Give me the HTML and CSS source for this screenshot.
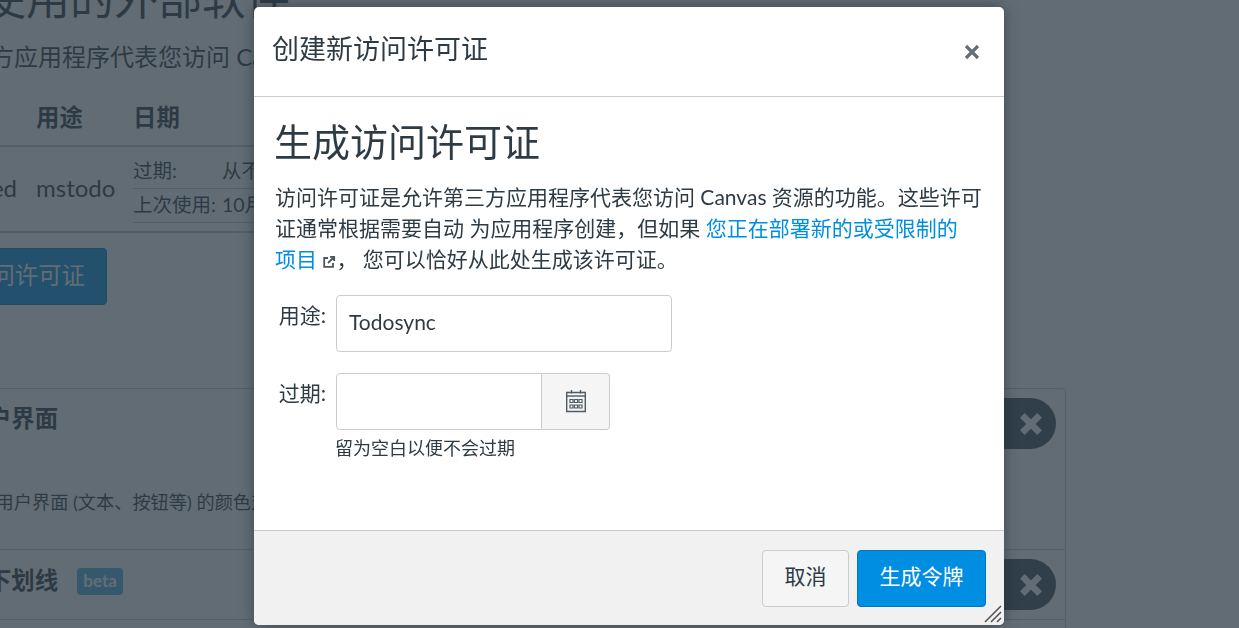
FILE: index.html
```html
<!DOCTYPE html>
<html lang="zh">
<head>
    <meta charset="UTF-8">
    <meta name="viewport" content="width=device-width, initial-scale=1.0">
    <title>创建新访问许可证</title>
    <link rel="stylesheet" href="styles.css">
</head>
<body>
    <div class="page">
        <h1 class="page-title">经核准使用的外部软件</h1>
        <p class="page-sub">这些第三方应用程序代表您访问 Canvas</p>
        <div class="token-table">
            <div class="token-head">
                <div class="col-app"></div>
                <div class="col-purpose">用途</div>
                <div class="col-date">日期</div>
            </div>
            <div class="token-row">
                <div class="col-app">Authorized</div>
                <div class="col-purpose">mstodo</div>
                <div class="col-date">
                    <div class="date-line"><span class="date-key">过期:</span><span>从不</span></div>
                    <div class="date-line"><span class="date-key">上次使用:</span><span>10月</span></div>
                </div>
            </div>
        </div>
        <button class="new-token">新建访问许可证</button>
        <div class="feature-panel">
            <div class="feature feature-first">
                <h3>高对比度用户界面</h3>
                <p>增强此用户界面 (文本、按钮等) 的颜色对比度</p>
                <span class="toggle"><svg viewBox="0 0 24 24" width="26" height="26"><path d="M4 4 20 20M20 4 4 20" stroke="#fff" stroke-width="6"/></svg></span>
            </div>
            <div class="feature feature-second">
                <h3>为链接添加下划线 <span class="beta">beta</span></h3>
                <span class="toggle"><svg viewBox="0 0 24 24" width="26" height="26"><path d="M4 4 20 20M20 4 4 20" stroke="#fff" stroke-width="6"/></svg></span>
            </div>
            <div class="feature feature-third"></div>
        </div>
    </div>

    <div class="overlay"></div>

    <div class="dialog">
        <div class="dialog-head">
            <h2>创建新访问许可证</h2>
            <svg class="close-icon" viewBox="0 0 16 16" width="16" height="16"><path d="M2 2 14 14M14 2 2 14" stroke="#666f76" stroke-width="3.2"/></svg>
        </div>
        <div class="dialog-body">
            <h1>生成访问许可证</h1>
            <p class="intro">访问许可证是允许第三方应用程序代表您访问 Canvas 资源的功能。这些许可证通常根据需要自动 为应用程序创建，但如果 <a href="#">您正在部署新的或受限制的<span class="nowrap">项目 <svg class="ext-icon" viewBox="0 0 14 14" width="14" height="14"><path d="M6 3H2.2v8.8H11V8M8 1.8h4.2V6M12 2 6 8" fill="none" stroke="#4a5660" stroke-width="1.8"/></svg></span></a>， 您可以恰好从此处生成该许可证。</p>
            <div class="field purpose-field">
                <label for="purpose">用途:</label>
                <input type="text" id="purpose" value="Todosync">
            </div>
            <div class="field">
                <label for="expires">过期:</label>
                <div class="date-wrap">
                    <div class="date-input">
                        <input type="text" id="expires">
                        <span class="cal-btn">
                            <svg viewBox="0 0 22 24" width="22" height="24">
                                <path d="M1.700 3.500h18.600v19H1.700z" fill="none" stroke="#4f5a63" stroke-width="1.400"/>
                                <path d="M1.700 7h18.600" stroke="#4f5a63" stroke-width="1.400"/>
                                <path d="M6.500 1v3.500M15.500 1v3.500" stroke="#4f5a63" stroke-width="1.400"/>
                                <path d="M5 10.500h3v3H5zM9.500 10.500h3v3h-3zM14 10.500h3v3h-3zM5 16h3v3H5zM9.500 16h3v3h-3zM14 16h3v3h-3z" fill="#fff" stroke="#4f5a63" stroke-width="1.200"/>
                            </svg>
                        </span>
                    </div>
                    <div class="hint">留为空白以便不会过期</div>
                </div>
            </div>
        </div>
        <div class="dialog-foot">
            <button class="btn">取消</button>
            <button class="btn btn-primary">生成令牌</button>
            <svg class="grip" viewBox="0 0 18 18" width="18" height="18"><path d="M17 1 1 17M17 7 7 17M17 13 13 17" stroke="#555" stroke-width="1.6"/></svg>
        </div>
    </div>
</body>
</html>
```

FILE: styles.css
```css
html, body {
    margin: 0;
    height: 100%;
    overflow: hidden;
}
body {
    font-family: Lato, "Noto Sans CJK SC", sans-serif;
    color: #2d3b45;
    background-color: #fff;
    font-size: 21px;
}

/* page behind the dialog */
.page {
    width: 1190px;
    height: 658px;
    overflow: hidden;
    margin: -30px 0 0 -124px;
}
.page-title {
    font-size: 44px;
    font-weight: 400;
    line-height: 56px;
    margin: 0 0 0 -26px;
    white-space: nowrap;
}
.page-sub {
    font-size: 24px;
    line-height: 36px;
    margin: 13px 0 0;
    text-indent: 18px;
}
.token-table {
    margin-top: 18px;
    width: 1000px;
}
.token-head {
    display: flex;
    height: 46px;
    padding-bottom: 6px;
    align-items: center;
    font-size: 23.4px;
    font-weight: 700;
    border-bottom: 2px solid #c7cdd1;
}
.token-row {
    display: flex;
    height: 84px;
    align-items: center;
    border-bottom: 2px solid #c7cdd1;
}
.col-app {
    width: 160px;
    text-align: right;
    padding-right: 19px;
    box-sizing: border-box;
    white-space: nowrap;
}
.col-purpose {
    width: 97px;
}
.token-row .col-app,
.token-row .col-purpose {
    font-size: 24px;
    padding-bottom: 3px;
}
.col-date {
    flex: 1;
    font-size: 19.5px;
}
.token-head .col-date {
    font-size: 23.4px;
}
.date-line {
    display: flex;
    height: 28px;
    padding-bottom: 5px;
    align-items: center;
    border-bottom: 1px solid #c7cdd1;
    white-space: nowrap;
}
.date-key {
    width: 89px;
}
.new-token {
    display: block;
    margin: 15px 0 0 -20px;
    width: 251px;
    height: 57px;
    border: 1px solid #0077be;
    border-radius: 4px;
    background-color: #008ee2;
    color: #fff;
    font: inherit;
    font-size: 23.4px;
    text-align: right;
    padding: 0 21px 6px 0;
}
.feature-panel {
    margin: 83px 0 0 0;
    border: 1px solid #c7cdd1;
    border-radius: 4px;
    width: 1190px;
    box-sizing: border-box;
}
.feature {
    display: flex;
    position: relative;
    border-bottom: 1px solid #c7cdd1;
    box-sizing: border-box;
}
.feature h3 {
    margin: 0 0 0 -20px;
    font-size: 23.4px;
    font-weight: 700;
    white-space: nowrap;
}
.feature-first {
    height: 161px;
    display: block;
    padding: 11px 0 0 14px;
}
.feature-first p {
    margin: 54px 0 0 50px;
    font-size: 18.2px;
    white-space: nowrap;
}
.feature-second {
    height: 70px;
    padding: 12px 0 0 14px;
}
.feature-third {
    height: 40px;
}
.beta {
    display: inline-block;
    margin-left: 13px;
    padding: 0 6.5px;
    height: 27px;
    line-height: 25px;
    font-size: 17px;
    font-weight: 700;
    border-radius: 4px;
    background-color: #4fb0e0;
    color: #fff;
    vertical-align: 2px;
}
.toggle {
    position: absolute;
    right: 9px;
    top: 9px;
    width: 120px;
    height: 51px;
    border-radius: 26px;
    background-color: #394b58;
    display: flex;
    justify-content: flex-end;
    align-items: center;
    padding-right: 12px;
    box-sizing: border-box;
}
.toggle svg {
    display: block;
}

.overlay {
    position: fixed;
    inset: 0;
    background-color: rgba(45, 59, 69, 0.75);
}

/* dialog */
.dialog {
    position: fixed;
    left: 254px;
    top: 7px;
    width: 750px;
    height: 618px;
    display: flex;
    flex-direction: column;
    background-color: #fff;
    border-radius: 5px;
    box-shadow: 0 0 14px rgba(30, 40, 50, 0.55);
}
.dialog-head {
    height: 90px;
    flex: none;
    box-sizing: border-box;
    border-bottom: 1px solid #c7cdd1;
    display: flex;
    align-items: center;
    justify-content: space-between;
    padding: 0 24px 0 18px;
}
.dialog-head h2 {
    margin: 0 0 8px;
    font-size: 27px;
    font-weight: 400;
}
.close-icon {
    margin-top: 1px;
}
.dialog-body {
    flex: 1;
    padding: 0 20px;
}
.dialog-body h1 {
    font-size: 38px;
    font-weight: 400;
    line-height: 56px;
    margin: 16px 0 0;
}
.intro {
    margin: 12px 0 0 1px;
    line-height: 31px;
    font-size: 21px;
}
.intro a {
    color: #008ee2;
    text-decoration: none;
}
.nowrap {
    white-space: nowrap;
}
.ext-icon {
    vertical-align: -2px;
}
.field {
    display: flex;
    align-items: flex-start;
}
.purpose-field {
    margin-top: 21px;
    margin-bottom: 21px;
}
.field label {
    width: 52px;
    text-align: right;
    margin-right: 10px;
    line-height: 40px;
    flex: none;
}
.field input {
    font: inherit;
    color: inherit;
    box-sizing: border-box;
    height: 57px;
    border: 1px solid #c7cdd1;
    border-radius: 4px;
    padding: 0 12px 5px;
    outline: none;
}
#purpose {
    width: 336px;
}
.date-input {
    display: flex;
    width: 274px;
}
#expires {
    width: 206px;
    border-radius: 4px 0 0 4px;
}
.cal-btn {
    width: 68px;
    height: 57px;
    box-sizing: border-box;
    border: 1px solid #c7cdd1;
    border-left: 0;
    border-radius: 0 4px 4px 0;
    background-color: #f5f5f5;
    display: flex;
    align-items: center;
    justify-content: center;
    padding-bottom: 2px;
}
.hint {
    font-size: 18px;
    margin: 4px 0 0 -1px;
}
.dialog-foot {
    flex: none;
    height: 95px;
    box-sizing: border-box;
    position: relative;
    border-top: 1px solid #c7cdd1;
    border-radius: 0 0 5px 5px;
    background-color: #f1f1f1;
    display: flex;
    justify-content: flex-end;
    gap: 8px;
    padding: 19px 18px 0 0;
}
.btn {
    height: 57px;
    padding: 0 21.5px 7px;
    font: inherit;
    color: #2d3b45;
    background-color: #f5f5f5;
    border: 1px solid #c7cdd1;
    border-radius: 4px;
}
.btn-primary {
    color: #fff;
    background-color: #008ee2;
    border-color: #0077be;
}
.grip {
    position: absolute;
    right: 2px;
    bottom: 2px;
}
```
